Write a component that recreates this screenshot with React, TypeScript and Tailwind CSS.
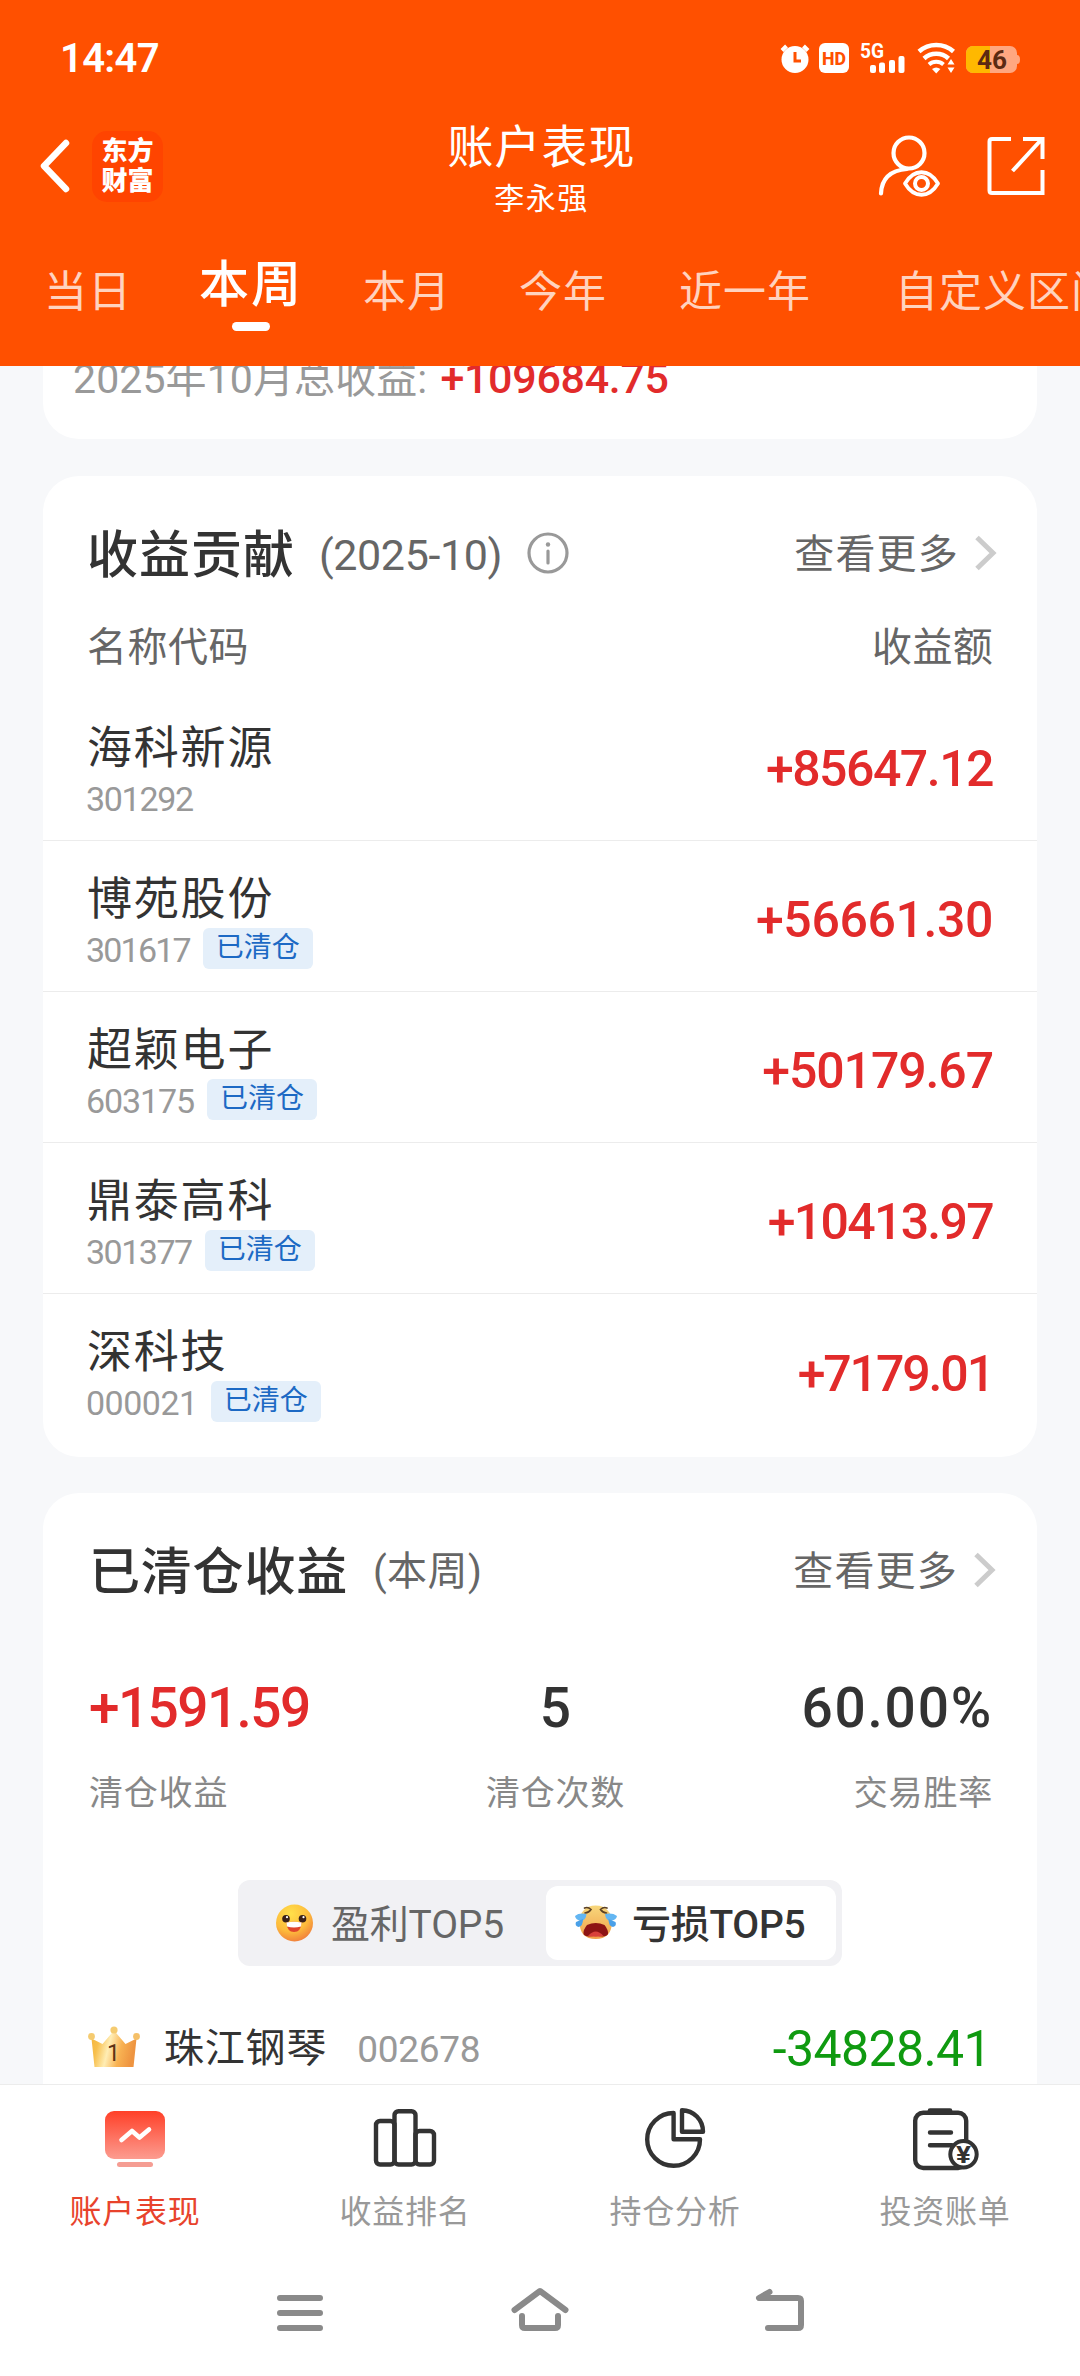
import { useState } from "react";
import clsx from "clsx";

const periods = [
  { label: "当日", margin: "" },
  { label: "本周", margin: "ml-[67px]" },
  { label: "本月", margin: "ml-[60px]" },
  { label: "今年", margin: "ml-[68px]" },
  { label: "近一年", margin: "ml-[72px]" },
  { label: "自定义区间", margin: "ml-[84px]" },
];

const stocks = [
  { name: "海科新源", code: "301292", amount: "+85647.12", closed: false, codeClass: "tracking-[-1.3px]", amountClass: "tracking-[-1.5px]" },
  { name: "博苑股份", code: "301617", amount: "+56661.30", closed: true, codeClass: "tracking-[-1.8px]", amountClass: "tracking-[-0.4px]" },
  { name: "超颖电子", code: "603175", amount: "+50179.67", closed: true, codeClass: "tracking-[-1.1px]", amountClass: "tracking-[-1.1px]" },
  { name: "鼎泰高科", code: "301377", amount: "+10413.97", closed: true, codeClass: "tracking-[-1.5px]", amountClass: "tracking-[-1.7px]" },
  { name: "深科技", code: "000021", amount: "+7179.01", closed: true, codeClass: "tracking-[-0.5px]", amountClass: "tracking-[-2.1px]" },
];

const StatusIcons = () => (
  <svg className="overflow-visible" width="242" height="32" viewBox="0 0 242 32" fill="none">
    {/* alarm */}
    <circle cx="17" cy="17.500" r="13.500" fill="#fff" />
    <path d="M4 8.500L8.500 4M30 8.500L25.500 4" stroke="#fff" strokeWidth="4" />
    <path d="M17 10V19H23" stroke="#ff5000" strokeWidth="3" />
    {/* HD */}
    <rect x="41" y="1" width="30" height="30" rx="6" fill="#fff" />
    <text x="44" y="22.500" textLength="24" lengthAdjust="spacingAndGlyphs" fontSize="19" fontWeight="800" fill="#ff5000">HD</text>
    {/* signal */}
    <text x="82" y="15.500" textLength="24" lengthAdjust="spacingAndGlyphs" fontSize="20" fontWeight="700" fill="#fff">5G</text>
    <rect x="92" y="23" width="6" height="8" rx="2" fill="#fff" />
    <rect x="101" y="20.500" width="6" height="10.500" rx="2" fill="#fff" />
    <rect x="111" y="18" width="6" height="13" rx="2" fill="#fff" />
    <rect x="120.500" y="14" width="6" height="17" rx="2" fill="#fff" />
    {/* wifi */}
    <path d="M141 9.500A26 26 0 0 1 175.500 9.500" stroke="#fff" strokeWidth="4.500" />
    <path d="M146 16.500A18 18 0 0 1 170.500 16.500" stroke="#fff" strokeWidth="4.500" />
    <path d="M151 22.500A11 11 0 0 1 165.500 22.500" stroke="#fff" strokeWidth="4" />
    <path d="M154 27Q158.200 24 162.400 27L158.200 31.500Z" fill="#fff" />
    <path d="M173 17L176.500 22.500H169.500ZM173 31L176.500 25.500H169.500Z" fill="#fff" />
    {/* battery */}
    <rect x="188" y="4" width="51" height="27" rx="7" fill="#ffa780" />
    <path d="M195 4H212V31H195A7 7 0 0 1 188 24V11A7 7 0 0 1 195 4Z" fill="#ffb800" />
    <path d="M239 13Q242 13 242 17.500Q242 22 239 22Z" fill="#ffa780" />
    <text x="199" y="26.500" textLength="30" lengthAdjust="spacingAndGlyphs" fontSize="25" fontWeight="700" fill="#5c2a12">46</text>
  </svg>
);

const UserEyeIcon = () => (
  <svg width="64" height="62" viewBox="0 0 64 62" fill="none" stroke="#fff" strokeWidth="4.200" strokeLinecap="round">
    <circle cx="32" cy="18" r="15.500" />
    <path d="M30 34Q5 36 4 58.500" />
    <path d="M28 48.500C37 33.500 52 33.500 61 48.500C52 63.500 37 63.500 28 48.500Z" fill="#ff5000" strokeWidth="3.800" strokeLinejoin="round" />
    <circle cx="44.500" cy="48.500" r="6.500" strokeWidth="4" />
  </svg>
);

const ShareIcon = () => (
  <svg width="58" height="60" viewBox="0 0 58 60" fill="none" stroke="#fff" strokeWidth="4">
    <path d="M24 3H5Q2.500 3 2.500 5.500V54.500Q2.500 57 5 57H55.500V34" />
    <path d="M36 3H55.500V23M54 4L25.500 35" />
  </svg>
);

const MoreLink = () => (
  <div className="flex items-center">
    <span className="text-[40px] leading-none tracking-[1.2px] text-[#666]">查看更多</span>
    <svg className="-mt-1 ml-[15px]" width="24" height="38" viewBox="0 0 24 38" fill="none" stroke="#ccc" strokeWidth="5">
      <path d="M3 3.500L19 19L3 34.500" />
    </svg>
  </div>
);

const SmileIcon = () => (
  <svg width="38" height="38" viewBox="0 0 38 38">
    <defs>
      <radialGradient id="smile" cx="0.4" cy="0.25" r="0.8">
        <stop offset="0" stopColor="#ffe04a" />
        <stop offset="0.6" stopColor="#fdbb3c" />
        <stop offset="1" stopColor="#f07a3c" />
      </radialGradient>
    </defs>
    <circle cx="18.500" cy="19" r="18.500" fill="url(#smile)" />
    <circle cx="10" cy="14.700" r="3.800" fill="#3a2018" />
    <circle cx="26.500" cy="14.700" r="3.800" fill="#3a2018" />
    <circle cx="11" cy="13.200" r="1.100" fill="#fff" />
    <circle cx="27.500" cy="13.200" r="1.100" fill="#fff" />
    <path d="M10.500 18.500Q18 17 25.500 18.500Q25 28 18 28Q11 28 10.500 18.500Z" fill="#e0452c" />
    <path d="M10.500 18.500Q18 17 25.500 18.500L25 22.500Q18 24.500 11 22.500Z" fill="#fff" />
  </svg>
);

const CryIcon = () => (
  <svg width="44" height="36" viewBox="0 0 44 36">
    <defs>
      <linearGradient id="cry" x1="0" y1="0" x2="0" y2="1">
        <stop offset="0" stopColor="#f7d77c" />
        <stop offset="1" stopColor="#f2a048" />
      </linearGradient>
    </defs>
    <path d="M21.700 0.500C32 0.500 38 8 38 17C38 28 32 34 21.700 34C11 34 5.500 28 5.500 17C5.500 8 11 0.500 21.700 0.500Z" fill="url(#cry)" />
    <path d="M13 20Q21.700 16 30.500 20Q34.500 25 34 29Q32.500 33 21.700 30.500Q11 33 9.500 29Q9 25 13 20Z" fill="#8d1414" />
    <path d="M14 31Q21.700 22 29.500 31Q21.700 32.500 14 31Z" fill="#d9403a" />
    <path d="M10.500 3Q14 1.500 17 4.500Q15 7.500 11 8M33 3Q29.500 1.500 26.500 4.500Q28.500 7.500 32.500 8" fill="none" stroke="#5a4026" strokeWidth="1.700" strokeLinecap="round" />
    <path d="M12.500 9Q12 15 7 16Q1.500 15 1 11Q5 7.500 12.500 9ZM31 9Q31.500 15 36.500 16Q42.500 15 43 11Q38.500 7.500 31 9Z" fill="#63b6f2" />
    <path d="M9 14Q9 21.500 4.500 22Q0.500 21 2 17ZM34.500 14Q34.500 21.500 39 22Q43 21 41.500 17Z" fill="#4aa0e8" />
  </svg>
);

const CrownIcon = () => (
  <svg className="-mt-1" width="52" height="42" viewBox="0 0 52 42">
    <defs>
      <linearGradient id="crown" x1="0" y1="0" x2="1" y2="0.2">
        <stop offset="0" stopColor="#f5b53c" />
        <stop offset="0.2" stopColor="#f7bf4c" />
        <stop offset="0.45" stopColor="#ffedb4" />
        <stop offset="0.72" stopColor="#f8b252" />
        <stop offset="1" stopColor="#ee9440" />
      </linearGradient>
    </defs>
    <path d="M3.500 12.500L14.500 18L26 4.500L37.500 18L48.500 12.500L45.500 41H6.500Z" fill="url(#crown)" />
    <circle cx="3.500" cy="10.500" r="3.400" fill="#f5cb70" />
    <circle cx="26" cy="4" r="3.600" fill="#f5cb70" />
    <circle cx="48.500" cy="10.500" r="3.400" fill="#f5c068" />
    <text x="25.500" y="34.500" textAnchor="middle" fontSize="23" fill="#5e3214">1</text>
  </svg>
);

const AccountIcon = () => (
  <svg width="66" height="64" viewBox="0 0 66 64">
    <defs>
      <linearGradient id="account" x1="0" y1="0" x2="0" y2="1">
        <stop offset="0" stopColor="#ff4028" />
        <stop offset="1" stopColor="#fc9c90" />
      </linearGradient>
    </defs>
    <rect x="3" y="4" width="60" height="48" rx="9" fill="url(#account)" />
    <rect x="15" y="55" width="36" height="5" rx="2.500" fill="#f59d93" />
    <path d="M19.500 33L30 24L37.500 30.500L47 22.500" fill="none" stroke="#fff" strokeWidth="4.600" strokeLinecap="round" strokeLinejoin="round" />
  </svg>
);

const RankIcon = () => (
  <svg width="66" height="64" viewBox="0 0 66 64" fill="none" stroke="#333" strokeWidth="4.400">
    <rect x="4" y="14" width="18.500" height="43.500" rx="4" />
    <rect x="22.500" y="4.200" width="21" height="53.300" rx="4" />
    <rect x="43.500" y="24" width="18.500" height="33.500" rx="4" />
  </svg>
);

const PieIcon = () => (
  <svg width="66" height="64" viewBox="0 0 66 64" fill="none" stroke="#333" strokeWidth="4.400" strokeLinejoin="round">
    <path d="M31.600 6V32.300H58A26.400 26.400 0 1 1 31.600 6Z" />
    <path d="M40 3.200A21.200 21.500 0 0 1 61 24.700H40Z" />
  </svg>
);

const BillIcon = () => (
  <svg className="overflow-visible" width="66" height="64" viewBox="0 0 66 64" fill="none" stroke="#333" strokeWidth="4.400" strokeLinecap="round">
    <rect x="3.200" y="5.800" width="51" height="55.200" rx="8" />
    <path d="M18 3.500H38" strokeWidth="4.600" />
    <path d="M18 25.500H39M18 38.300H40" />
    <circle cx="51.500" cy="47.300" r="13.200" fill="#fff" strokeWidth="4" />
    <text x="44" y="55.800" textLength="15" lengthAdjust="spacingAndGlyphs" fontSize="24" fontWeight="700" fill="#333" stroke="none">¥</text>
  </svg>
);

const tabs = [
  { label: "账户表现", Icon: AccountIcon },
  { label: "收益排名", Icon: RankIcon },
  { label: "持仓分析", Icon: PieIcon },
  { label: "投资账单", Icon: BillIcon },
];

export default function App() {
  const [period, setPeriod] = useState("本周");
  const [rank, setRank] = useState("loss");
  const [tab, setTab] = useState("账户表现");

  return (
    <div className="flex h-[2376px] w-[1080px] flex-col overflow-hidden bg-[#f7f8fa] font-['Roboto','Noto_Sans_CJK_SC',sans-serif]">
      <header className="h-[366px] shrink-0 overflow-hidden bg-[#ff5000] text-white">
        <div className="flex h-[116px] items-center justify-between pr-[60px] pl-[60px]">
          <span className="pt-[2px] text-[40px] leading-none font-semibold tracking-[-0.7px]">14:47</span>
          <StatusIcons />
        </div>

        <div className="flex h-[100px] justify-between pr-[35px] pl-[38px]">
          <div className="flex w-[220px] items-center">
            <svg width="34" height="56" viewBox="0 0 34 56" fill="none" stroke="#fff" strokeWidth="6.500" strokeLinecap="round" strokeLinejoin="round">
              <path d="M28 5L6 28L28 51" />
            </svg>
            <div className="ml-5 flex h-[71px] w-[71px] flex-col items-center justify-center rounded-[15px] bg-[#ff4400] text-[26px] leading-[30px] font-black">
              <span>东方</span>
              <span>财富</span>
            </div>
          </div>
          <div className="flex flex-col items-center gap-[14px] pt-2">
            <h1 className="text-[46px] leading-[46px] tracking-[1px]">账户表现</h1>
            <span className="text-[30px] leading-[30px] tracking-[1.5px]">李永强</span>
          </div>
          <div className="flex w-[220px] items-center justify-end gap-[46px]">
            <UserEyeIcon />
            <ShareIcon />
          </div>
        </div>

        <nav className="flex w-[1300px] pl-[44px]">
          {periods.map((p) => (
            <button
              key={p.label}
              onClick={() => setPeriod(p.label)}
              className={clsx("flex shrink-0 flex-col items-center whitespace-nowrap", p.margin)}
            >
              {period === p.label ? (
                <>
                  <span className="mt-[44px] text-[50px] leading-[50px] font-medium tracking-[2px]">{p.label}</span>
                  <span className="mt-[12px] h-[9px] w-[38px] rounded-full bg-white" />
                </>
              ) : (
                <span className="mt-[55px] text-[43px] leading-[43px] tracking-[1px] text-white/75">{p.label}</span>
              )}
            </button>
          ))}
        </nav>
      </header>

      <main className="flex min-h-0 flex-1 flex-col overflow-hidden px-[43px]">
        <section className="flex h-[73px] shrink-0 items-end rounded-b-[36px] bg-white pb-[30px] pl-[30px]">
          <p className="text-[41px] leading-[60px] tracking-[0.1px] whitespace-nowrap text-[#999]">
            2025年10月总收益:
            <span className="ml-[13px] text-[43px] font-medium tracking-[-0.3px] text-[#e22b2b]">+109684.75</span>
          </p>
        </section>

        <section className="mt-[37px] h-[981px] shrink-0 rounded-[36px] bg-white pt-[53px]">
          <div className="flex h-[52px] items-center justify-between pr-[39px] pl-11">
            <div className="flex items-center">
              <h2 className="text-[51px] leading-none font-medium tracking-[1px] text-[#333]">收益贡献</h2>
              <span className="ml-[24px] text-[43px] leading-none tracking-[-0.4px] text-[#666]">(2025-10)</span>
              <svg className="-mt-1 ml-[25px]" width="42" height="42" viewBox="0 0 42 42" fill="none" stroke="#999" strokeWidth="3.200" strokeLinecap="round">
                <circle cx="21" cy="21" r="19" />
                <path d="M21 19V31" />
                <circle cx="21" cy="12.500" r="2.200" fill="#999" stroke="none" />
              </svg>
            </div>
            <MoreLink />
          </div>
          <div className="mt-[47px] mb-[22px] flex justify-between px-11 text-[40px] leading-10 text-[#666]">
            <span className="tracking-[0.5px]">名称代码</span>
            <span className="tracking-[0.3px]">收益额</span>
          </div>
          {stocks.map((s) => (
            <div
              key={s.code}
              className="flex h-[151px] items-center justify-between border-b border-[#ececec] px-11 last:border-b-0"
            >
              <div className="flex flex-col gap-[5px] self-start pt-[36px]">
                <span className="text-[45px] leading-[46px] tracking-[1.8px] text-[#333]">{s.name}</span>
                <div className="flex h-[41px] items-center">
                  <span className={clsx("-ml-px pt-[2px] text-[34px] leading-none text-[#999]", s.codeClass)}>{s.code}</span>
                  {s.closed && (
                    <span className="ml-[13px] h-[41px] w-[110px] rounded-md bg-[#e4effa] text-center text-[28px] leading-[40px] text-[#1c69c4]">
                      已清仓
                    </span>
                  )}
                </div>
              </div>
              <span className={clsx("pt-2 text-[50px] leading-none font-medium text-[#e22b2b]", s.amountClass)}>{s.amount}</span>
            </div>
          ))}
        </section>

        <section className="mt-9 h-[700px] shrink-0 rounded-t-[36px] bg-white pt-[53px]">
          <div className="flex h-[52px] items-center justify-between pr-10 pl-[46px]">
            <div className="flex items-center">
              <h2 className="text-[51px] leading-none font-medium tracking-[0.8px] text-[#333]">已清仓收益</h2>
              <span className="ml-[25px] text-[40px] leading-none tracking-[0.4px] text-[#666]">(本周)</span>
            </div>
            <MoreLink />
          </div>

          <div className="mt-[83px] flex justify-between pr-[44px] pl-[46px]">
            <div className="flex flex-col items-start gap-[40px]">
              <span className="text-[55px] leading-[55px] font-medium tracking-[-1.6px] text-[#e22b2b]">+1591.59</span>
              <span className="text-[34px] leading-[34px] tracking-[0.8px] text-[#888]">清仓收益</span>
            </div>
            <div className="flex flex-col items-center gap-[40px]">
              <span className="text-[55px] leading-[55px] font-medium text-[#333]">5</span>
              <span className="text-[34px] leading-[34px] tracking-[0.8px] text-[#888]">清仓次数</span>
            </div>
            <div className="flex flex-col items-end gap-[40px]">
              <span className="text-[55px] leading-[55px] font-medium tracking-[1.8px] text-[#333]">60.00%</span>
              <span className="text-[34px] leading-[34px] tracking-[0.8px] text-[#888]">交易胜率</span>
            </div>
          </div>

          <div className="mx-auto mt-[70px] flex h-[86px] w-[604px] rounded-xl bg-[#f1f1f4] p-[6px]">
            <button
              onClick={() => setRank("profit")}
              className={clsx("flex flex-1 items-center rounded-xl pl-8", rank === "profit" ? "bg-white font-medium text-[#333]" : "text-[#666]")}
            >
              <SmileIcon />
              <span className="ml-[17px] pt-[5px] text-[39px] leading-none tracking-[-0.2px]">盈利TOP5</span>
            </button>
            <button
              onClick={() => setRank("loss")}
              className={clsx("flex w-[290px] items-center rounded-xl pl-7", rank === "loss" ? "bg-white font-medium text-[#333]" : "text-[#666]")}
            >
              <CryIcon />
              <span className="ml-[14px] pt-[5px] text-[39px] leading-none tracking-[-0.3px]">亏损TOP5</span>
            </button>
          </div>

          <div className="mt-[63px] flex h-10 items-center pr-[46px] pl-[45px]">
            <CrownIcon />
            <span className="ml-6 text-[40px] leading-none tracking-[0.8px] text-[#333]">珠江钢琴</span>
            <span className="ml-[30px] text-[37px] leading-none tracking-[-0.3px] text-[#999]">002678</span>
            <span className="ml-auto text-[50px] leading-none tracking-[-0.6px] text-[#0f9a10]">-34828.41</span>
          </div>
        </section>
      </main>

      <footer className="h-[292px] shrink-0 border-t border-[#ececec] bg-white">
        <div className="flex pt-[22px]">
          {tabs.map(({ label, Icon }) => (
            <button key={label} onClick={() => setTab(label)} className="flex flex-1 flex-col items-center">
              <Icon />
              <span className={clsx("mt-[25px] text-[32px] leading-[32px] tracking-[0.8px]", tab === label ? "text-[#e8432c]" : "text-[#999]")}>
                {label}
              </span>
            </button>
          ))}
        </div>
        <div className="mt-[59px] flex justify-center">
          <div className="flex w-60 justify-center">
            <svg width="60" height="46" viewBox="0 0 60 46" fill="none" stroke="#8a8a8a" strokeWidth="6" strokeLinecap="round">
              <path d="M10 11H50M10 26H50M10 41H50" />
            </svg>
          </div>
          <div className="flex w-60 justify-center">
            <svg width="60" height="46" viewBox="0 0 60 46" fill="none" stroke="#8a8a8a" strokeWidth="6" strokeLinecap="round" strokeLinejoin="round">
              <path d="M4.500 23L30 4L55.500 23M12 29V38Q12 41 15 41H45Q48 41 48 38V29" />
            </svg>
          </div>
          <div className="flex w-60 justify-center">
            <svg width="60" height="46" viewBox="0 0 60 46" fill="none" stroke="#8a8a8a" strokeWidth="6" strokeLinecap="round" strokeLinejoin="round">
              <path d="M19.500 5L9 11H48Q51 11 51 14V38Q51 41 48 41H18" />
            </svg>
          </div>
        </div>
      </footer>
    </div>
  );
}
